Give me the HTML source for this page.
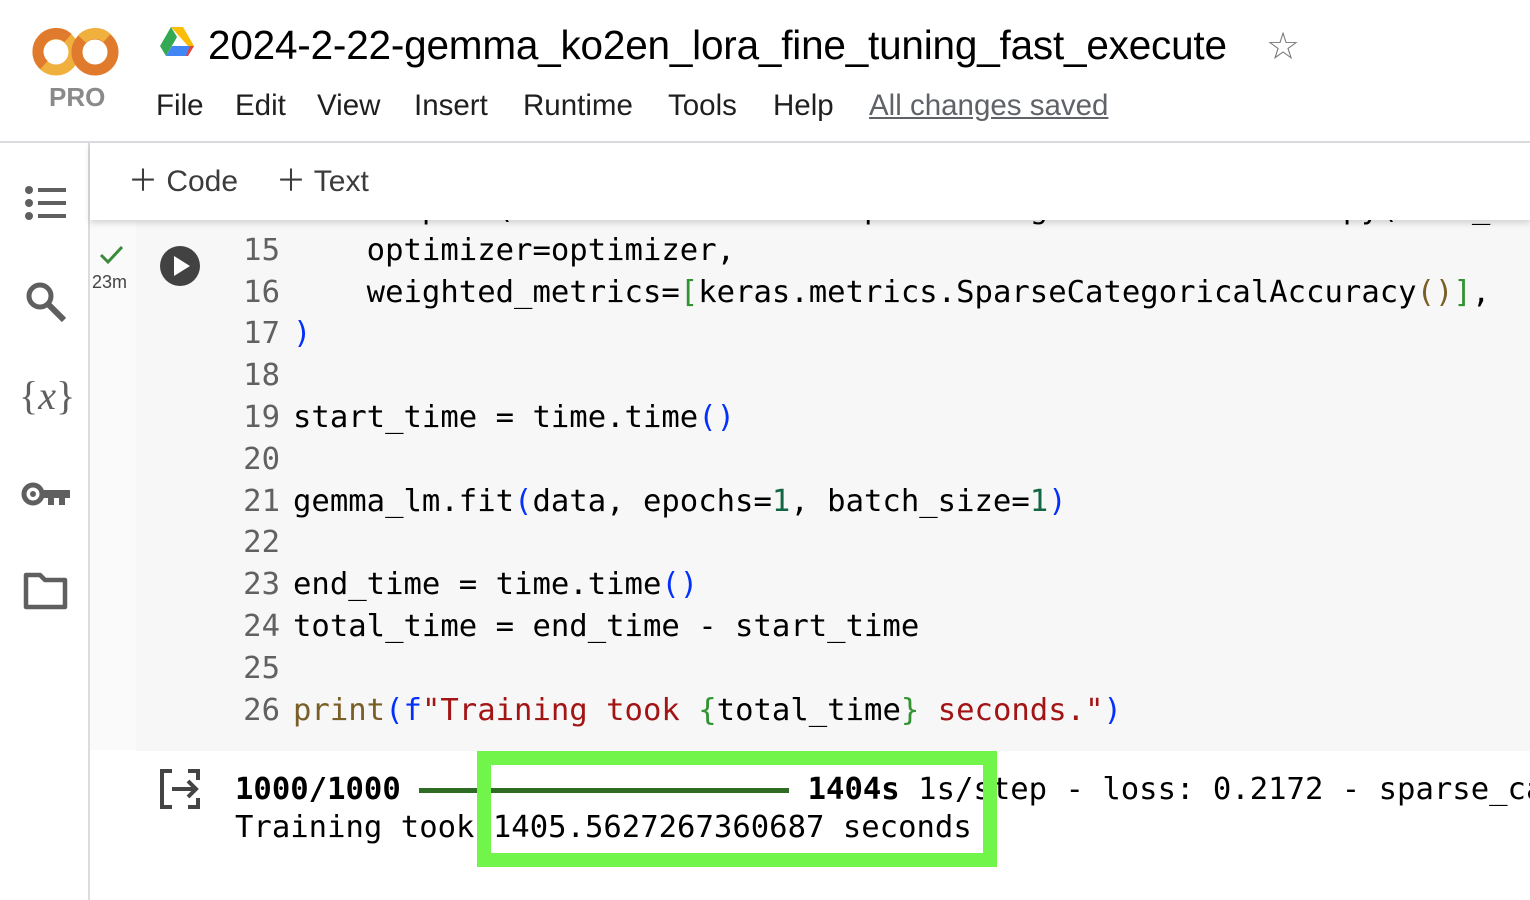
<!DOCTYPE html>
<html><head><meta charset="utf-8"><style>
*{margin:0;padding:0;box-sizing:border-box}
body{width:1530px;height:900px;overflow:hidden;background:#fff;font-family:"Liberation Sans",Arial,sans-serif;position:relative}
.abs{position:absolute}
.menu span{position:absolute;top:0;font-size:29.5px;color:#1f1f1f}
.code{font-family:"DejaVu Sans Mono","Liberation Mono",monospace;font-size:30.6px;color:#000}
.ln{position:absolute;left:136px;width:144px;text-align:right;color:#616161}
.tx{position:absolute;left:293px;white-space:pre}
.b{color:#0431fa}.g{color:#319331}.br{color:#795e26}.s{color:#a31515}.n{color:#116644}
</style></head><body>
<svg class="abs" style="left:32px;top:24px" width="90" height="56" viewBox="0 0 90 56">
<circle cx="24" cy="28" r="18" fill="none" stroke="#f0b03e" stroke-width="11"/>
<path d="M36 14 A18 18 0 0 0 12 41" fill="none" stroke="#e07b2e" stroke-width="11"/>
<circle cx="63" cy="28" r="18" fill="none" stroke="#e07b2e" stroke-width="11"/>
<path d="M50 15 A18 18 0 0 1 75 14" fill="none" stroke="#f0b03e" stroke-width="11"/>
</svg>
<div class="abs" style="left:49px;top:82px;font-size:26px;font-weight:bold;color:#8a8a8a">PRO</div>
<svg class="abs" style="left:159px;top:26px" width="36" height="32" viewBox="0 0 36 32">
<polygon points="12,1 24,1 35,20 29,20" fill="#fbbc04"/>
<polygon points="12,1 18,11 7,30 1,20" fill="#34a853"/>
<polygon points="7,30 13,20 35,20 29,30" fill="#4285f4"/>
<polygon points="29,30 35,20 31,20 27,30" fill="#ea4335"/>
</svg>
<div class="abs" style="left:208px;top:22px;font-size:40.5px;color:#000;letter-spacing:-0.2px">2024-2-22-gemma_ko2en_lora_fine_tuning_fast_execute</div>
<div class="abs" style="left:1266px;top:24px;font-size:38px;color:#777">☆</div>
<div class="menu abs" style="left:0;top:89px;width:1200px;height:40px">
<span style="left:156px">File</span><span style="left:235px">Edit</span><span style="left:317px">View</span><span style="left:414px">Insert</span><span style="left:523px">Runtime</span><span style="left:668px">Tools</span><span style="left:773px">Help</span><span style="left:869px;color:#5f6368;text-decoration:underline">All changes saved</span>
</div>
<div class="abs" style="left:0;top:141px;width:1530px;height:2px;background:#dadce0"></div>
<div class="abs" style="left:88px;top:143px;width:2px;height:757px;background:#dadce0"></div>
<svg class="abs" style="left:24px;top:184px" width="44" height="40" viewBox="0 0 44 40" fill="#5f5f5f">
<circle cx="5" cy="6" r="4"/><circle cx="5" cy="19" r="4"/><circle cx="5" cy="32" r="4"/>
<rect x="14" y="4" width="28" height="4"/><rect x="14" y="17" width="28" height="4"/><rect x="14" y="30" width="28" height="4"/>
</svg>
<svg class="abs" style="left:24px;top:280px" width="44" height="44" viewBox="0 0 44 44"><circle cx="16" cy="16" r="11" fill="none" stroke="#5f5f5f" stroke-width="5"/><line x1="24" y1="24" x2="40" y2="40" stroke="#5f5f5f" stroke-width="6"/></svg>
<div class="abs" style="left:19px;top:372px;font-family:'Liberation Serif',serif;font-size:40px;color:#5f5f5f"><span>{</span><i>x</i><span>}</span></div>
<svg class="abs" style="left:21px;top:478px" width="50" height="32" viewBox="0 0 50 32"><circle cx="12" cy="16" r="9" fill="none" stroke="#5f5f5f" stroke-width="5"/><circle cx="12" cy="16" r="3" fill="#5f5f5f"/><path d="M20 12 H49 V20 H44 V27 H38 V20 H33 V27 H27 V20 H20Z" fill="#5f5f5f"/></svg>
<svg class="abs" style="left:23px;top:572px" width="46" height="38" viewBox="0 0 46 38"><path d="M3 3 H17 L22 8 H42 V35 H3 Z" fill="none" stroke="#5f5f5f" stroke-width="4.5" stroke-linejoin="round"/></svg>
<div class="abs" style="left:90px;top:220px;width:46px;height:530px;background:#fafafa"></div>
<div class="abs" style="left:136px;top:220px;width:1394px;height:531px;background:#f7f7f7;overflow:hidden">
<div class="code" style="position:absolute;left:-136px;top:-32px;width:1530px">
<div style="position:relative;height:41.8px;line-height:41.8px"><span class="ln">14</span><span class="tx">    compile(loss=keras.losses.SparseCategoricalCrossentropy(from_logits=</span></div>
<div style="position:relative;height:41.8px;line-height:41.8px"><span class="ln">15</span><span class="tx">    optimizer=optimizer,</span></div>
<div style="position:relative;height:41.8px;line-height:41.8px"><span class="ln">16</span><span class="tx">    weighted_metrics=<span class="g">[</span>keras.metrics.SparseCategoricalAccuracy<span class="br">()</span><span class="g">]</span>,</span></div>
<div style="position:relative;height:41.8px;line-height:41.8px"><span class="ln">17</span><span class="tx"><span class="b">)</span></span></div>
<div style="position:relative;height:41.8px;line-height:41.8px"><span class="ln">18</span></div>
<div style="position:relative;height:41.8px;line-height:41.8px"><span class="ln">19</span><span class="tx">start_time = time.time<span class="b">()</span></span></div>
<div style="position:relative;height:41.8px;line-height:41.8px"><span class="ln">20</span></div>
<div style="position:relative;height:41.8px;line-height:41.8px"><span class="ln">21</span><span class="tx">gemma_lm.fit<span class="b">(</span>data, epochs=<span class="n">1</span>, batch_size=<span class="n">1</span><span class="b">)</span></span></div>
<div style="position:relative;height:41.8px;line-height:41.8px"><span class="ln">22</span></div>
<div style="position:relative;height:41.8px;line-height:41.8px"><span class="ln">23</span><span class="tx">end_time = time.time<span class="b">()</span></span></div>
<div style="position:relative;height:41.8px;line-height:41.8px"><span class="ln">24</span><span class="tx">total_time = end_time - start_time</span></div>
<div style="position:relative;height:41.8px;line-height:41.8px"><span class="ln">25</span></div>
<div style="position:relative;height:41.8px;line-height:41.8px"><span class="ln">26</span><span class="tx"><span class="br">print</span><span class="b">(</span><span class="b">f</span><span class="s">"Training took </span><span class="g">{</span>total_time<span class="g">}</span><span class="s"> seconds."</span><span class="b">)</span></span></div>
</div>
</div>
<div class="abs" style="left:90px;top:143px;width:1440px;height:77px;background:#fff;box-shadow:0 3px 6px rgba(0,0,0,0.15)"></div>
<div class="abs" style="left:128px;top:156px;font-size:30px;color:#3c3c3c">＋ Code</div>
<div class="abs" style="left:276px;top:156px;font-size:30px;color:#3c3c3c">＋ Text</div>
<svg class="abs" style="left:99px;top:244px" width="26" height="22" viewBox="0 0 26 22"><path d="M2 11 L9 18 L23 3" fill="none" stroke="#3c8a3c" stroke-width="3"/></svg>
<div class="abs" style="left:92px;top:272px;font-size:18px;color:#444">23m</div>
<svg class="abs" style="left:159px;top:245px" width="42" height="42" viewBox="0 0 42 42"><circle cx="21" cy="21" r="20" fill="#424242"/><polygon points="15,11 31,21 15,31" fill="#fff"/></svg>
<svg class="abs" style="left:158px;top:768px" width="46" height="42" viewBox="0 0 46 42"><path d="M14 3 H4 V39 H14 M30 3 H40 V12 M40 30 V39 H30" fill="none" stroke="#444" stroke-width="4"/><path d="M14 21 H38 M30 13 L38 21 L30 29" fill="none" stroke="#444" stroke-width="4"/></svg>
<div class="abs" style="left:0;top:760px;width:1530px;height:100px;overflow:hidden">
<div class="abs code" style="left:235px;top:10px;white-space:pre;line-height:40px"><b>1000/1000</b> <span style="display:inline-block;width:370px;height:5px;background:#2e6b23;vertical-align:middle"></span> <b>1404s</b> 1s/step - loss: 0.2172 - sparse_categorical</div>
<div class="abs code" style="left:235px;top:48px;white-space:pre;line-height:40px">Training took 1405.5627267360687 seconds</div>
</div>
<div class="abs" style="left:477px;top:751px;width:520px;height:116px;border:14px solid #72f54a"></div>
</body></html>
